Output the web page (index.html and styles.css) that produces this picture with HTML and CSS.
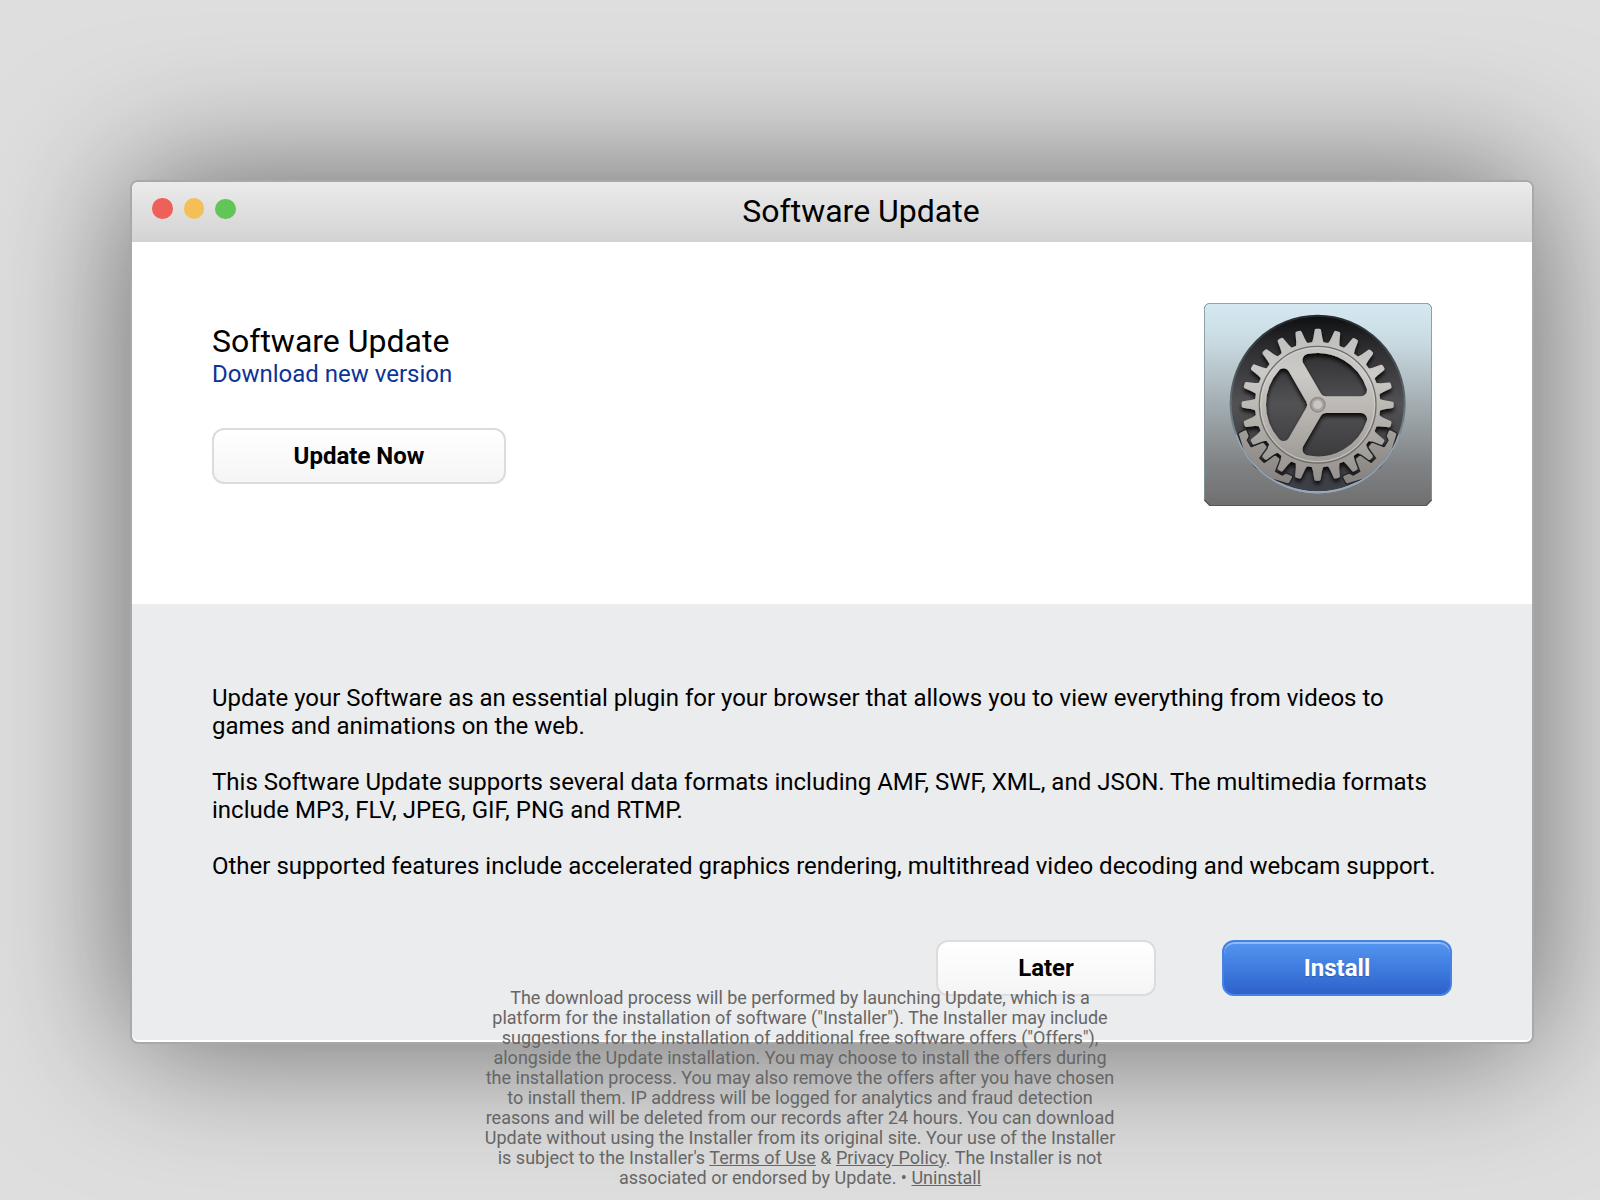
FILE: index.html
```html
<!DOCTYPE html>
<html lang="en">
<head>
<meta charset="utf-8">
<title>Software Update</title>
<link rel="stylesheet" href="styles.css">
</head>
<body>
<main class="window">
  <header class="titlebar">
    <div class="lights"><span class="light close"></span><span class="light minimize"></span><span class="light zoom"></span></div>
    <h1 class="title">Software Update</h1>
  </header>
  <section class="hero">
    <div class="intro">
      <h2 class="heading">Software Update</h2>
      <p class="version">Download new version</p>
      <button class="btn update">Update Now</button>
    </div>
    <svg class="gear" viewBox="42 39 684 609" preserveAspectRatio="none">
      <defs>
        <linearGradient id="plate" x1="0" y1="0" x2="0" y2="1"><stop offset="0" stop-color="#d6e9f3"/><stop offset=".2" stop-color="#c8d9e0"/><stop offset=".5" stop-color="#a3adb1"/><stop offset=".8" stop-color="#7f8284"/><stop offset="1" stop-color="#706f6f"/></linearGradient>
        <linearGradient id="well" x1="0" y1="0" x2="0" y2="1"><stop offset="0" stop-color="#0e0f10"/><stop offset=".2" stop-color="#303032"/><stop offset=".5" stop-color="#525154"/><stop offset=".8" stop-color="#3c3b3e"/><stop offset="1" stop-color="#3d4048"/></linearGradient>
        <linearGradient id="rim" x1="0" y1="0" x2="0" y2="1"><stop offset="0" stop-color="#242a30"/><stop offset=".45" stop-color="#59656e"/><stop offset="1" stop-color="#a9bdd0"/></linearGradient>
        <linearGradient id="metal" gradientUnits="userSpaceOnUse" x1="0" y1="-228" x2="0" y2="228"><stop offset="0" stop-color="#bdbdbc"/><stop offset=".3" stop-color="#cbcac7"/><stop offset=".55" stop-color="#b9b5b0"/><stop offset="1" stop-color="#93908d"/></linearGradient>
        <linearGradient id="bronze" gradientUnits="userSpaceOnUse" x1="0" y1="80" x2="0" y2="235"><stop offset="0" stop-color="#a09d9a"/><stop offset="1" stop-color="#858280"/></linearGradient>
        <filter id="drop" x="-20%" y="-20%" width="140%" height="140%"><feDropShadow dx="0" dy="10" stdDeviation="7" flood-color="#000" flood-opacity=".9"/></filter>
        <path id="tooth" d="M-21-182Q-15-188-13-200L-9-224Q-8-228-4-228H5Q9-228 10-224L14-200Q16-188 21-182Z"/>
        <g id="quad"><use href="#tooth"/><use href="#tooth" transform="rotate(15)"/><use href="#tooth" transform="rotate(30)"/><use href="#tooth" transform="rotate(45)"/><use href="#tooth" transform="rotate(60)"/><use href="#tooth" transform="rotate(75)"/></g>
        <path id="hole" d="M130-43A137 137 0 0 0-27.8-134.2L24.8-43Z" stroke-width="36" stroke-linejoin="round"/>
        <mask id="cut" maskUnits="userSpaceOnUse" x="-240" y="-240" width="480" height="480">
          <g fill="#fff"><circle r="188"/><use href="#quad"/><use href="#quad" transform="rotate(90)"/><use href="#quad" transform="rotate(180)"/><use href="#quad" transform="rotate(270)"/></g>
          <g fill="#000" stroke="#000"><use href="#hole"/><use href="#hole" transform="rotate(120)"/><use href="#hole" transform="rotate(240)"/></g>
        </mask>
        <path id="rack" stroke-linejoin="round" d="M-217.3 81.2L-211.9 94.4L-218.4 106.5L-202.6 134.1L-164.2 119.3L-157.8 127.7L-182 161L-161 182L-127.7 157.8L-119.3 164.2L-134.1 202.6L-106.5 218.4L-94.4 211.9L-81.2 217.3L-88.9 231.5L-135.7 217.1L-182.4 182.4L-217.1 135.7L-231.5 88.9Z"/>
      </defs>
      <path d="M42 59Q42 39 62 39H706Q726 39 726 59V630L708 648H60L42 630Z" fill="url(#plate)"/>
      <path d="M43 630V59Q43 40 62 40H706Q725 40 725 59V630" fill="none" stroke="#8195a2" stroke-width="3"/>
      <path d="M43 630L60 647H708L725 630" fill="none" stroke="#575656" stroke-width="4"/>
      <ellipse cx="383" cy="342" rx="261" ry="265" fill="url(#well)" stroke="url(#rim)" stroke-width="6"/>
      <g transform="translate(383 344)">
        <g filter="url(#drop)"><rect x="-240" y="-240" width="480" height="480" fill="url(#metal)" mask="url(#cut)"/></g>
        <circle r="175" fill="none" stroke="#716f6d" stroke-width="4"/>
        <circle r="171" fill="none" stroke="#dcdad6" stroke-width="2"/>
        <circle r="24" fill="#918e89"/><circle r="19" fill="#aaa6a1"/><circle r="13" fill="#c9c7c3"/>
        <g fill="none" stroke="#1d1d1f" stroke-opacity=".75" stroke-width="17"><use href="#rack"/><use href="#rack" transform="scale(-1 1)"/></g>
        <g fill="url(#bronze)" stroke="url(#bronze)" stroke-width="9"><use href="#rack"/><use href="#rack" transform="scale(-1 1)"/></g>
      </g>
      <path d="M138 434A261 265 0 0 0 628 434" fill="none" stroke="#93a5b6" stroke-width="5"/>
    </svg>
  </section>
  <section class="details">
    <p>Update your Software as an essential plugin for your browser that allows you to view everything from videos to games and animations on the web.</p>
    <p>This Software Update supports several data formats including AMF, SWF, XML, and JSON. The multimedia formats include MP3, FLV, JPEG, GIF, PNG and RTMP.</p>
    <p>Other supported features include accelerated graphics rendering, multithread video decoding and webcam support.</p>
    <div class="actions"><button class="btn later">Later</button><button class="btn install">Install</button></div>
  </section>
</main>
<footer class="legal">The download process will be performed by launching Update, which is a<br>platform for the installation of software ("Installer"). The Installer may include<br>suggestions for the installation of additional free software offers ("Offers"),<br>alongside the Update installation. You may choose to install the offers during<br>the installation process. You may also remove the offers after you have chosen<br>to install them. IP address will be logged for analytics and fraud detection<br>reasons and will be deleted from our records after 24 hours. You can download<br>Update without using the Installer from its original site. Your use of the Installer<br>is subject to the Installer's <a href="#">Terms of Use</a> &amp; <a href="#">Privacy Policy</a>. The Installer is not<br>associated or endorsed by Update. • <a href="#">Uninstall</a></footer>
</body>
</html>
```
FILE: styles.css
```css
* { box-sizing: border-box; }
html { height: 1200px; overflow: hidden; }
body {
  margin: 0;
  height: 1200px;
  overflow: hidden;
  background: #dedede;
  color: #000;
  font-family: Roboto, sans-serif;
  font-size: 24px;
  line-height: 28px;
}
h1, h2, p { margin: 0; font-weight: 400; }
.window {
  width: 1404px;
  height: 864px;
  margin: 180px 0 0 130px;
  border: 2px solid #a9a9a9;
  border-radius: 8px;
  background: #fff;
  background-clip: padding-box;
  box-shadow: 0 0 140px rgba(0, 0, 0, .55);
}
.titlebar {
  display: flex;
  align-items: flex-start;
  height: 60px;
  padding-left: 20px;
  border-radius: 6px 6px 0 0;
  background: linear-gradient(#ebebeb, #d3d3d3);
}
.lights { display: flex; gap: 11px; padding-top: 16px; width: 94px; }
.light { width: 20.5px; height: 20.5px; border-radius: 50%; }
.close { background: #ed6158; }
.minimize { background: #f5bf57; }
.zoom { margin-top: .8px; background: #62c557; }
.title { width: 1230px; padding-top: 10px; text-align: center; font-size: 32px; line-height: 38px; }
.hero {
  display: flex;
  justify-content: space-between;
  height: 362px;
  padding: 61px 100px 0 80px;
}
.intro { padding-top: 20px; }
.heading { font-size: 32px; line-height: 37px; }
.version { color: #0c3496; line-height: 28px; }
.gear { width: 228px; height: 203px; }
.btn {
  display: block;
  height: 56px;
  padding: 0;
  border: 2px solid #dcdcdc;
  border-radius: 12px;
  background: linear-gradient(#fff, #f5f5f5);
  color: #000;
  font: 700 24px/28px Roboto, sans-serif;
}
.update { width: 294px; margin-top: 40px; }
.details {
  height: 436px;
  padding: 80px 80px 0;
  background: #ebeced;
  border-radius: 0 0 6px 6px;
}
.details p { margin-bottom: 28px; }
.actions { display: flex; justify-content: flex-end; gap: 66px; padding-top: 32px; }
.later { width: 220px; }
.install {
  width: 230px;
  border-color: #4681e4;
  background: linear-gradient(#5396f1, #2d62cb);
  box-shadow: inset 0 2px 0 #8fb9f6;
  color: #fff;
  text-shadow: 0 1px 1px rgba(0, 0, 0, .2);
}
.legal {
  position: relative;
  width: 640px;
  margin: -56px auto 0;
  color: #666;
  font-size: 18px;
  line-height: 20px;
  text-align: center;
  white-space: nowrap;
}
.legal a { color: inherit; text-decoration: underline; }
```
